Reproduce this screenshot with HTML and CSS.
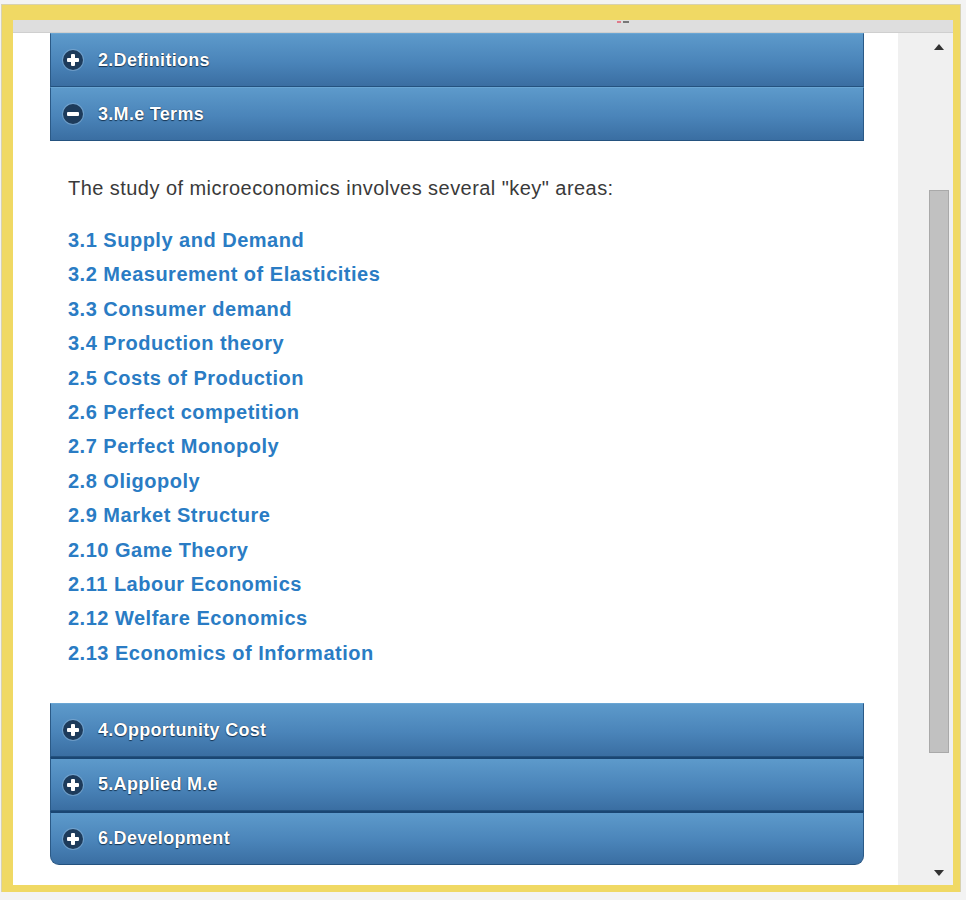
FILE: index.html
```html
<!DOCTYPE html>
<html lang="en">
<head>
  <meta charset="UTF-8" />
  <title>Microeconomics</title>
  <link rel="stylesheet" href="styles.css">
</head>
<body>
  <div class="frame">
    <div class="top-strip"><span class="dots"></span></div>
    <div class="window">
      <div class="main">
        <div class="accordion">
          <div class="acc-head"><span class="icon plus"></span>2.Definitions</div>
          <div class="acc-head open"><span class="icon minus"></span>3.M.e Terms</div>
          <div class="acc-panel">
            <p class="intro">The study of microeconomics involves several "key" areas:</p>
            <ul class="topics">
              <li><a href="#">3.1 Supply and Demand</a></li>
              <li><a href="#">3.2 Measurement of Elasticities</a></li>
              <li><a href="#">3.3 Consumer demand</a></li>
              <li><a href="#">3.4 Production theory</a></li>
              <li><a href="#">2.5 Costs of Production</a></li>
              <li><a href="#">2.6 Perfect competition</a></li>
              <li><a href="#">2.7 Perfect Monopoly</a></li>
              <li><a href="#">2.8 Oligopoly</a></li>
              <li><a href="#">2.9 Market Structure</a></li>
              <li><a href="#">2.10 Game Theory</a></li>
              <li><a href="#">2.11 Labour Economics</a></li>
              <li><a href="#">2.12 Welfare Economics</a></li>
              <li><a href="#">2.13 Economics of Information</a></li>
            </ul>
          </div>
          <div class="acc-head"><span class="icon plus"></span>4.Opportunity Cost</div>
          <div class="acc-head dark-top"><span class="icon plus"></span>5.Applied M.e</div>
          <div class="acc-head last dark-top"><span class="icon plus"></span>6.Development</div>
        </div>
      </div>
      <div class="scrollbar">
        <span class="arrow up"></span>
        <div class="track"><div class="thumb"></div></div>
        <span class="arrow down"></span>
      </div>
    </div>
  </div>
</body>
</html>
```

FILE: styles.css
```css
body {
  margin: 0;
  background: #f3f3f3;
  font-family: "Liberation Sans", Arial, sans-serif;
}
.frame {
  margin: 5px 6px 0 2px;
  height: 865px;
  border-style: solid;
  border-color: #f0d964;
  border-width: 15px 7px 7px 11px;
  display: flex;
  flex-direction: column;
  box-shadow: inset 0 0 0 1px #cfc69a, 0 0 0 1px #d8d2b0;
}
.top-strip {
  height: 12px;
  background: #dedede;
  border-bottom: 1px solid #cfcfcf;
  position: relative;
}
.dots {
  position: absolute;
  left: 604px;
  top: 1px;
  width: 12px;
  height: 2px;
  background: linear-gradient(90deg, #e07a8a 0 4px, transparent 4px 6px, #777 6px);
}
.window {
  flex: 1;
  display: flex;
  min-height: 0;
}
.main {
  flex: 1;
  background: #fff;
  padding-left: 37px;
}
.accordion {
  width: 814px;
}
.acc-head {
  height: 54px;
  box-sizing: border-box;
  display: flex;
  align-items: center;
  padding-left: 12px;
  color: #fff;
  font-weight: bold;
  font-size: 18px;
  letter-spacing: 0.3px;
  text-shadow: 0 1px 1px #173553, 0 0 1px #1c3c5e;
  background: linear-gradient(#5d9acb, #4a84b9 55%, #3a6ea2);
  border: 1px solid #2b5a87;
  border-top: 1px solid #6aa6d4;
  border-bottom: 1px solid #24527f;
}
.acc-head.dark-top {
  border-top: 2px solid #1a4673;
}
.acc-head.last {
  border-radius: 0 0 9px 9px;
}
.icon {
  width: 20px;
  height: 20px;
  border-radius: 50%;
  background: #1d3b5b;
  box-shadow: 0 0 0 1px rgba(140, 180, 215, 0.55);
  margin-right: 15px;
  position: relative;
  flex-shrink: 0;
}
.icon::before,
.icon::after {
  content: "";
  position: absolute;
  background: #fff;
  border-radius: 1px;
}
.icon::before {
  left: 4px;
  top: 8px;
  width: 12px;
  height: 4px;
}
.plus::after {
  left: 8px;
  top: 4px;
  width: 4px;
  height: 12px;
}
.acc-panel {
  padding: 34px 18px 33px;
}
.intro {
  margin: 0 0 22px;
  font-size: 20px;
  line-height: 26px;
  letter-spacing: 0.45px;
  color: #3a3a3a;
}
.topics {
  list-style: none;
  margin: 0;
  padding: 0;
}
.topics li {
  line-height: 34.4px;
  font-size: 20px;
  letter-spacing: 0.5px;
}
.topics a {
  color: #2a7cc4;
  font-weight: bold;
  text-decoration: none;
}
.scrollbar {
  width: 55px;
  background: #f0f0f0;
  display: flex;
  flex-direction: column;
  align-items: flex-end;
  padding-right: 4px;
  box-sizing: border-box;
}
.arrow {
  width: 0;
  height: 0;
  border-left: 5px solid transparent;
  border-right: 5px solid transparent;
  margin-right: 5px;
}
.arrow.up {
  border-bottom: 6px solid #333;
  margin-top: 11px;
}
.arrow.down {
  border-top: 6px solid #333;
  margin-bottom: 9px;
}
.track {
  flex: 1;
  width: 20px;
  padding-top: 140px;
  padding-bottom: 117px;
}
.thumb {
  height: 100%;
  background: #c1c1c1;
  border: 1px solid #a9a9a9;
  box-sizing: border-box;
}
```
